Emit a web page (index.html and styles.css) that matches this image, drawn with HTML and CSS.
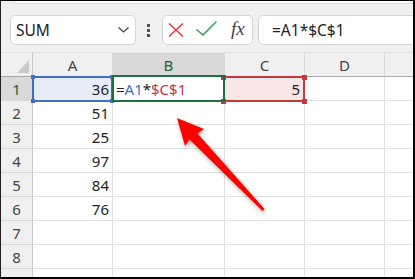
FILE: index.html
```html
<!DOCTYPE html>
<html lang="en">
<head>
  <meta charset="UTF-8">
  <title>Formula bar</title>
  <link rel="stylesheet" href="styles.css">
</head>
<body>
  <div class="frame">
    <div class="toolbar">
      <div class="ribbon-edge"></div>
      <div class="bar">
        <div class="name-box">
          <span>SUM</span>
          <svg width="11" height="6" viewBox="0 0 11 6"><polyline points="0.5,0.5 5.5,5 10.5,0.5" fill="none" stroke="#444" stroke-width="1.3"/></svg>
        </div>
        <div class="grip"><i></i><i></i><i></i></div>
        <div class="fx-buttons">
          <svg class="cancel" width="16" height="14" viewBox="0 0 16 14"><path d="M1 0.5 L15 13.5 M15 0.5 L1 13.5" stroke="#e2393f" stroke-width="1.5" fill="none"/></svg>
          <svg class="enter" width="21" height="15" viewBox="0 0 21 15"><polyline points="0.5,8.5 7,14 20.5,0.5" fill="none" stroke="#33a05a" stroke-width="1.5"/></svg>
          <span class="fx">fx</span>
        </div>
        <div class="formula">=A1*$C$1</div>
      </div>
    </div>

    <div class="sheet">
      <div class="corner"><span class="tri"></span></div>
      <div class="col-head">A</div>
      <div class="col-head selected">B</div>
      <div class="col-head">C</div>
      <div class="col-head">D</div>
      <div class="col-head"></div>

      <div class="row-head selected">1</div>
      <div class="cell num ref-blue">36
        <div class="range blue"><i class="h tl"></i><i class="h tr"></i><i class="h bl"></i><i class="h br"></i></div>
      </div>
      <div class="cell editing">=<span class="c-blue">A1</span>*<span class="c-red">$C$1</span>
        <div class="range green"></div>
      </div>
      <div class="cell num ref-red">5
        <div class="range red"><i class="h tl"></i><i class="h tr"></i><i class="h bl"></i><i class="h br"></i></div>
      </div>
      <div class="cell"></div>
      <div class="cell"></div>

      <div class="row-head">2</div>
      <div class="cell num">51</div><div class="cell"></div><div class="cell"></div><div class="cell"></div><div class="cell"></div>
      <div class="row-head">3</div>
      <div class="cell num">25</div><div class="cell"></div><div class="cell"></div><div class="cell"></div><div class="cell"></div>
      <div class="row-head">4</div>
      <div class="cell num">97</div><div class="cell"></div><div class="cell"></div><div class="cell"></div><div class="cell"></div>
      <div class="row-head">5</div>
      <div class="cell num">84</div><div class="cell"></div><div class="cell"></div><div class="cell"></div><div class="cell"></div>
      <div class="row-head">6</div>
      <div class="cell num">76</div><div class="cell"></div><div class="cell"></div><div class="cell"></div><div class="cell"></div>
      <div class="row-head">7</div>
      <div class="cell"></div><div class="cell"></div><div class="cell"></div><div class="cell"></div><div class="cell"></div>
      <div class="row-head">8</div>
      <div class="cell"></div><div class="cell"></div><div class="cell"></div><div class="cell"></div><div class="cell"></div>
      <div class="row-head">9</div>
      <div class="cell"></div><div class="cell"></div><div class="cell"></div><div class="cell"></div><div class="cell"></div>
    </div>

    <svg class="arrow" width="415" height="279" viewBox="0 0 415 279">
      <polygon points="177,118 204,129 197.5,133.5 264.5,209 262.5,211 189.5,139.5 185,146" fill="#ff0000"/>
    </svg>
  </div>
</body>
</html>
```

FILE: styles.css
```css
body {
  margin: 0;
  font-family: "Noto Sans", "Open Sans", sans-serif;
  font-size: 15px;
  color: #222;
  background: #fff;
}
.frame {
  position: relative;
  width: 415px;
  height: 279px;
  box-sizing: border-box;
  border-top: 1px solid #000;
  border-left: 1px solid #222;
  border-right: 2px solid #000;
  border-bottom: 2px solid #000;
  overflow: hidden;
}

/* formula bar */
.toolbar {
  height: 51px;
  background: #f0f0f0;
}
.ribbon-edge {
  height: 2px;
  margin-left: 12px;
  background: #fafafa;
  border-left: 1px solid #dcdcdc;
  border-bottom: 1px solid #dcdcdc;
  border-bottom-left-radius: 6px;
}
.bar {
  display: flex;
  align-items: center;
  height: 30px;
  margin-top: 11px;
  padding-left: 9px;
}
.name-box {
  width: 126px;
  height: 30px;
  box-sizing: border-box;
  display: flex;
  align-items: center;
  justify-content: space-between;
  padding: 0 6px 0 5px;
  background: #fff;
  border: 1px solid #d6d6d6;
  border-radius: 5px;
}
.name-box span {
  font-size: 15.5px;
}
.grip {
  display: flex;
  flex-direction: column;
  gap: 2px;
  margin-left: 11px;
}
.grip i {
  display: block;
  width: 3px;
  height: 3px;
  background: #505050;
}
.fx-buttons {
  width: 91px;
  height: 30px;
  box-sizing: border-box;
  margin-left: 12px;
  display: flex;
  align-items: center;
  background: #fff;
  border: 1px solid #d6d6d6;
  border-radius: 5px;
}
.cancel {
  margin-left: 5px;
}
.enter {
  margin-left: 12px;
  margin-top: -3px;
}
.fx {
  margin-left: 14px;
  font-family: "Liberation Serif", serif;
  font-style: italic;
  font-size: 19px;
  color: #444;
  margin-top: -2px;
}
.formula {
  flex: 1;
  height: 30px;
  box-sizing: border-box;
  margin-left: 5px;
  margin-right: -8px;
  padding-left: 13px;
  display: flex;
  align-items: center;
  background: #fff;
  border: 1px solid #d6d6d6;
  border-radius: 5px;
  font-size: 15.5px;
}

/* grid */
.sheet {
  display: grid;
  grid-template-columns: 32px 80px 112px 80px 80px 40px;
  grid-template-rows: 25px repeat(9, 24px);
}
.sheet > div {
  position: relative;
  box-sizing: border-box;
  border-right: 1px solid #e0e0e0;
  border-bottom: 1px solid #e0e0e0;
}
.corner,
.col-head,
.row-head {
  background: #f0f0f0;
  color: #444;
}
.sheet > .corner,
.sheet > .col-head {
  border-bottom: 1px solid #a8a8a8;
  border-right-color: #d8d8d8;
  border-top: 1px solid #e2e2e2;
}
.col-head {
  display: flex;
  align-items: center;
  justify-content: center;
}
.sheet > .row-head,
.sheet > .corner {
  border-right: 1px solid #c8c8c8;
}
.sheet > .row-head {
  border-bottom-color: #d8d8d8;
  display: flex;
  align-items: center;
  justify-content: center;
}
.col-head.selected,
.row-head.selected {
  background: #d9d9d9;
  color: #1e5c38;
}
.tri {
  position: absolute;
  right: 3px;
  bottom: 3px;
  width: 0;
  height: 0;
  border-left: 12px solid transparent;
  border-bottom: 13px solid #c9c9c9;
}
.cell {
  display: flex;
  align-items: center;
  padding: 1px 3px 0;
  white-space: nowrap;
}
.cell.num {
  justify-content: flex-end;
}
.ref-blue {
  background: #e6edf8;
}
.ref-red {
  background: #f9e6e6;
}
.ref-red.num {
  padding-right: 4px;
}
.c-blue {
  color: #3a6fcc;
}
.c-red {
  color: #c8334f;
}

/* reference outlines */
.range {
  position: absolute;
  border: 2px solid;
  pointer-events: none;
}
.range.blue {
  left: -1px;
  right: -1px;
  top: -1px;
  bottom: -2px;
  border-color: #3f6fc7;
  z-index: 1;
}
.range.green {
  left: -1px;
  right: -1px;
  top: -2px;
  bottom: -2px;
  border-color: #1f6e43;
  z-index: 2;
}
.range.red {
  left: -2px;
  right: -1px;
  top: -1px;
  bottom: -2px;
  border-color: #c43a40;
  z-index: 1;
}
.h {
  position: absolute;
  width: 4px;
  height: 4px;
  background: #3f6fc7;
  z-index: 3;
}
.range.red .h {
  width: 5px;
  height: 5px;
  background: #c43a40;
}
.h.tl { left: -3px; top: -3px; }
.h.tr { right: -3px; top: -3px; }
.h.bl { left: -3px; bottom: -3px; }
.h.br { right: -3px; bottom: -3px; }
.range.red .h.tl { left: -4px; top: -3px; }
.range.red .h.tr { right: -4px; top: -3px; }
.range.red .h.bl { left: -4px; bottom: -4px; }
.range.red .h.br { right: -4px; bottom: -4px; }

.arrow {
  position: absolute;
  left: -1px;
  top: -1px;
  pointer-events: none;
  z-index: 5;
  filter: drop-shadow(1px 2px 2px rgba(0, 0, 0, 0.35));
}
```
